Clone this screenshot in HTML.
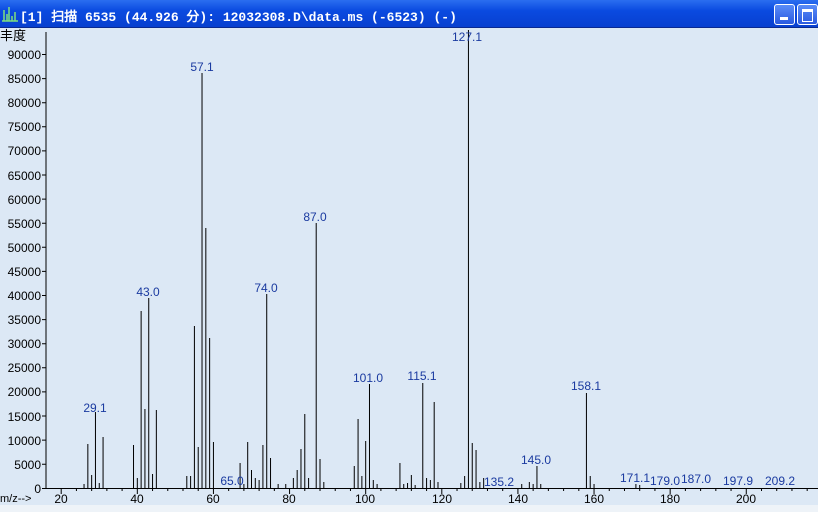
<!DOCTYPE html>
<html><head><meta charset="utf-8"><style>
html,body{margin:0;padding:0;width:818px;height:512px;overflow:hidden;background:#dce8f5}
.tb{position:absolute;left:0;top:0;width:818px;height:27px;background:linear-gradient(#2a6ef0,#0a4ae0 40%,#0840d0);border-bottom:1px solid #0a2a90}
.tt{position:absolute;left:20px;top:6px;color:#fff;font:bold 13px "Liberation Mono","WenQuanYi Zen Hei",monospace;white-space:nowrap}
.btn{position:absolute;top:4px;width:19px;height:19px;border:1px solid #fff;border-radius:3px;background:linear-gradient(#5a8cf8,#2a5ae0)}
svg{position:absolute;left:0;top:0}
text{font-family:"Liberation Sans","WenQuanYi Zen Hei",sans-serif}
</style></head><body>
<div class="tb">
<svg width="18" height="20" style="left:1px;top:4px"><path d="M1 17 H17 M3 17 V6 M6 17 V10 M8 17 V3 M11 17 V12 M14 17 V8" stroke="#7ee07e" stroke-width="1.5" fill="none"/></svg>
<div class="tt">[1] 扫描 6535 (44.926 分): 12032308.D\data.ms (-6523) (-)</div>
<div class="btn" style="left:774px"><div style="position:absolute;left:5px;top:12px;width:8px;height:3px;background:#fff"></div></div>
<div class="btn" style="left:797px"><div style="position:absolute;left:4px;top:4px;width:9px;height:9px;border:1px solid #fff;border-top-width:3px"></div></div>
</div>
<svg width="818" height="512" style="top:0">
<rect x="0" y="505" width="818" height="7" fill="#eef3f8"/>
<text x="0" y="40" font-size="13" fill="#000">丰度</text>
<line x1="46" y1="32" x2="46" y2="489" stroke="#000"/>
<line x1="46" y1="488.5" x2="818" y2="488.5" stroke="#000"/>
<g font-size="12" fill="#000" text-anchor="end">
<text x="41" y="59">90000</text><text x="41" y="83">85000</text><text x="41" y="107">80000</text><text x="41" y="131">75000</text><text x="41" y="155">70000</text><text x="41" y="180">65000</text><text x="41" y="204">60000</text><text x="41" y="228">55000</text><text x="41" y="252">50000</text><text x="41" y="276">45000</text><text x="41" y="300">40000</text><text x="41" y="324">35000</text><text x="41" y="348">30000</text><text x="41" y="372">25000</text><text x="41" y="396">20000</text><text x="41" y="421">15000</text><text x="41" y="445">10000</text><text x="41" y="469">5000</text><text x="41" y="493">0</text>
</g>
<g stroke="#000">
<path d="M42 54.5H46M42 78.6H46M42 102.7H46M42 126.8H46M42 150.9H46M42 175H46M42 199.1H46M42 223.2H46M42 247.3H46M42 271.4H46M42 295.5H46M42 319.6H46M42 343.7H46M42 367.8H46M42 391.9H46M42 416H46M42 440.1H46M42 464.2H46M42 488.5H46"/>
</g>
<text x="0" y="502" font-size="11" fill="#000">m/z--&gt;</text>
<g font-size="12" fill="#000" text-anchor="middle">
<text x="61" y="503">20</text><text x="137" y="503">40</text><text x="213" y="503">60</text><text x="289" y="503">80</text><text x="365" y="503">100</text><text x="442" y="503">120</text><text x="518" y="503">140</text><text x="594" y="503">160</text><text x="670" y="503">180</text><text x="746" y="503">200</text>
</g>
<g transform="translate(61.2,0) scale(3.806,1)" stroke="#000" fill="none">
<path vector-effect="non-scaling-stroke" d="M0 488V494M20 488V494M40 488V494M60 488V494M80 488V494M100 488V494M120 488V494M140 488V494M160 488V494M180 488V494M4 488V491M8 488V491M12 488V491M16 488V491M24 488V491M28 488V491M32 488V491M36 488V491M44 488V491M48 488V491M52 488V491M56 488V491M64 488V491M68 488V491M72 488V491M76 488V491M84 488V491M88 488V491M92 488V491M96 488V491M104 488V491M108 488V491M112 488V491M116 488V491M124 488V491M128 488V491M132 488V491M136 488V491M144 488V491M148 488V491M152 488V491M156 488V491M164 488V491M168 488V491M172 488V491M176 488V491M184 488V491M188 488V491M192 488V491M196 488V491"/>
<path vector-effect="non-scaling-stroke" d="M6 488V484M7 488V444M8 488V475M9 488V412M10 488V483M11 488V437M19 488V445M20 488V478M21 488V311M22 488V409M23 488V298M24 488V474M25 488V410M33 488V476M34 488V476M35 488V326M36 488V447M37 488V73M38 488V228M39 488V338M40 488V442M47 488V463M48 488V484M49 488V442M50 488V470M51 488V478M52 488V480M53 488V445M54 488V294M55 488V458M57 488V484M59 488V484M61 488V478M62 488V470M63 488V449M64 488V414M65 488V478M67 488V223M68 488V459M69 488V482M77 488V466M78 488V419M79 488V476M80 488V441M81 488V384M82 488V480M83 488V484M89 488V463M90 488V484M91 488V483M92 488V475M93 488V485M95 488V383M96 488V478M97 488V480M98 488V402M99 488V482M105 488V483M106 488V476M107 488V30M108 488V443M109 488V450M110 488V482M111 488V478M121 488V484M123 488V482M124 488V484M125 488V466M126 488V484M138 488V393M139 488V476M140 488V484M151 488V484M152 488V485"/>
</g>
<g font-size="12" fill="#1a3aa0" text-anchor="middle">
<text x="95" y="412">29.1</text><text x="148" y="296">43.0</text><text x="202" y="71">57.1</text><text x="266" y="292">74.0</text><text x="315" y="221">87.0</text><text x="368" y="382">101.0</text><text x="422" y="380">115.1</text><text x="467" y="41">127.1</text><text x="586" y="390">158.1</text><text x="536" y="464">145.0</text><text x="499" y="486">135.2</text><text x="232" y="485">65.0</text><text x="635" y="482">171.1</text><text x="665" y="485">179.0</text><text x="696" y="483">187.0</text><text x="738" y="485">197.9</text><text x="780" y="485">209.2</text>
</g>
</svg>
</body></html>
